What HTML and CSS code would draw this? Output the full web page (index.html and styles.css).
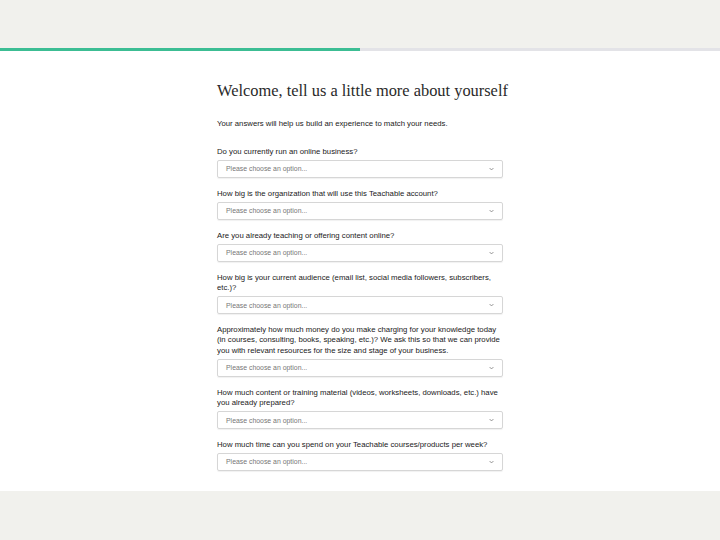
FILE: index.html
```html
<!DOCTYPE html>
<html lang="en">
<head>
<meta charset="utf-8">
<title>Welcome</title>
<link rel="stylesheet" href="styles.css">
</head>
<body>
  <header class="topbar"></header>
  <div class="progress"><div class="progress-fill" style="width: 50%"></div></div>
  <main class="panel">
    <div class="survey">
      <h1 class="title">Welcome, tell us a little more about yourself</h1>
      <p class="intro">Your answers will help us build an experience to match your needs.</p>
      <form class="fields">
        <div class="field">
          <label class="label">Do you currently run an online business?</label>
          <div class="select"><span>Please choose an option...</span><svg class="chev" viewBox="0 0 8 5" width="5" height="4"><path d="M1 1l3 3 3-3" fill="none" stroke="#7a7a7a" stroke-width="1.3"/></svg></div>
        </div>
        <div class="field">
          <label class="label">How big is the organization that will use this Teachable account?</label>
          <div class="select"><span>Please choose an option...</span><svg class="chev" viewBox="0 0 8 5" width="5" height="4"><path d="M1 1l3 3 3-3" fill="none" stroke="#7a7a7a" stroke-width="1.3"/></svg></div>
        </div>
        <div class="field">
          <label class="label">Are you already teaching or offering content online?</label>
          <div class="select"><span>Please choose an option...</span><svg class="chev" viewBox="0 0 8 5" width="5" height="4"><path d="M1 1l3 3 3-3" fill="none" stroke="#7a7a7a" stroke-width="1.3"/></svg></div>
        </div>
        <div class="field">
          <label class="label">How big is your current audience (email list, social media followers, subscribers, etc.)?</label>
          <div class="select"><span>Please choose an option...</span><svg class="chev" viewBox="0 0 8 5" width="5" height="4"><path d="M1 1l3 3 3-3" fill="none" stroke="#7a7a7a" stroke-width="1.3"/></svg></div>
        </div>
        <div class="field">
          <label class="label">Approximately how much money do you make charging for your knowledge today (in courses, consulting, books, speaking, etc.)? We ask this so that we can provide you with relevant resources for the size and stage of your business.</label>
          <div class="select"><span>Please choose an option...</span><svg class="chev" viewBox="0 0 8 5" width="5" height="4"><path d="M1 1l3 3 3-3" fill="none" stroke="#7a7a7a" stroke-width="1.3"/></svg></div>
        </div>
        <div class="field">
          <label class="label">How much content or training material (videos, worksheets, downloads, etc.) have you already prepared?</label>
          <div class="select"><span>Please choose an option...</span><svg class="chev" viewBox="0 0 8 5" width="5" height="4"><path d="M1 1l3 3 3-3" fill="none" stroke="#7a7a7a" stroke-width="1.3"/></svg></div>
        </div>
        <div class="field">
          <label class="label">How much time can you spend on your Teachable courses/products per week?</label>
          <div class="select"><span>Please choose an option...</span><svg class="chev" viewBox="0 0 8 5" width="5" height="4"><path d="M1 1l3 3 3-3" fill="none" stroke="#7a7a7a" stroke-width="1.3"/></svg></div>
        </div>
      </form>
    </div>
  </main>
</body>
</html>
```
FILE: styles.css
```css
html, body {
  margin: 0;
  padding: 0;
}

body {
  background: #f1f1ed;
  font-family: "Liberation Sans", Arial, sans-serif;
  color: #222;
  height: 540px;
  overflow: hidden;
}

.topbar {
  height: 48px;
}

.progress {
  height: 3px;
  background: #e3e3e7;
}

.progress-fill {
  height: 100%;
  background: #3cbd93;
}

.panel {
  background: #fff;
  padding: 30px 0 20px;
}

.survey {
  width: 286px;
  margin: 0 auto;
}

.title {
  margin: 0;
  font-family: "Liberation Serif", "Times New Roman", serif;
  font-weight: normal;
  font-size: 16.4px;
  line-height: 20px;
  color: #2a2a2a;
  white-space: nowrap;
}

.intro {
  margin: 18px 0 0;
  font-size: 7.75px;
  line-height: 10px;
  color: #222;
}

.fields {
  margin-top: 18px;
  display: flex;
  flex-direction: column;
  gap: 11px;
}

.field {
  display: flex;
  flex-direction: column;
  gap: 2.5px;
}

.label {
  font-size: 7.75px;
  line-height: 10.4px;
  color: #1a1a1a;
}

.select {
  height: 18px;
  box-sizing: border-box;
  border: 1px solid #d6d6d6;
  border-radius: 2px;
  box-shadow: 0 1px 1px rgba(0, 0, 0, 0.06);
  display: flex;
  align-items: center;
  justify-content: space-between;
  padding: 0 8px 0 8px;
  font-size: 6.9px;
  color: #777;
}

.chev {
  display: block;
}
```
